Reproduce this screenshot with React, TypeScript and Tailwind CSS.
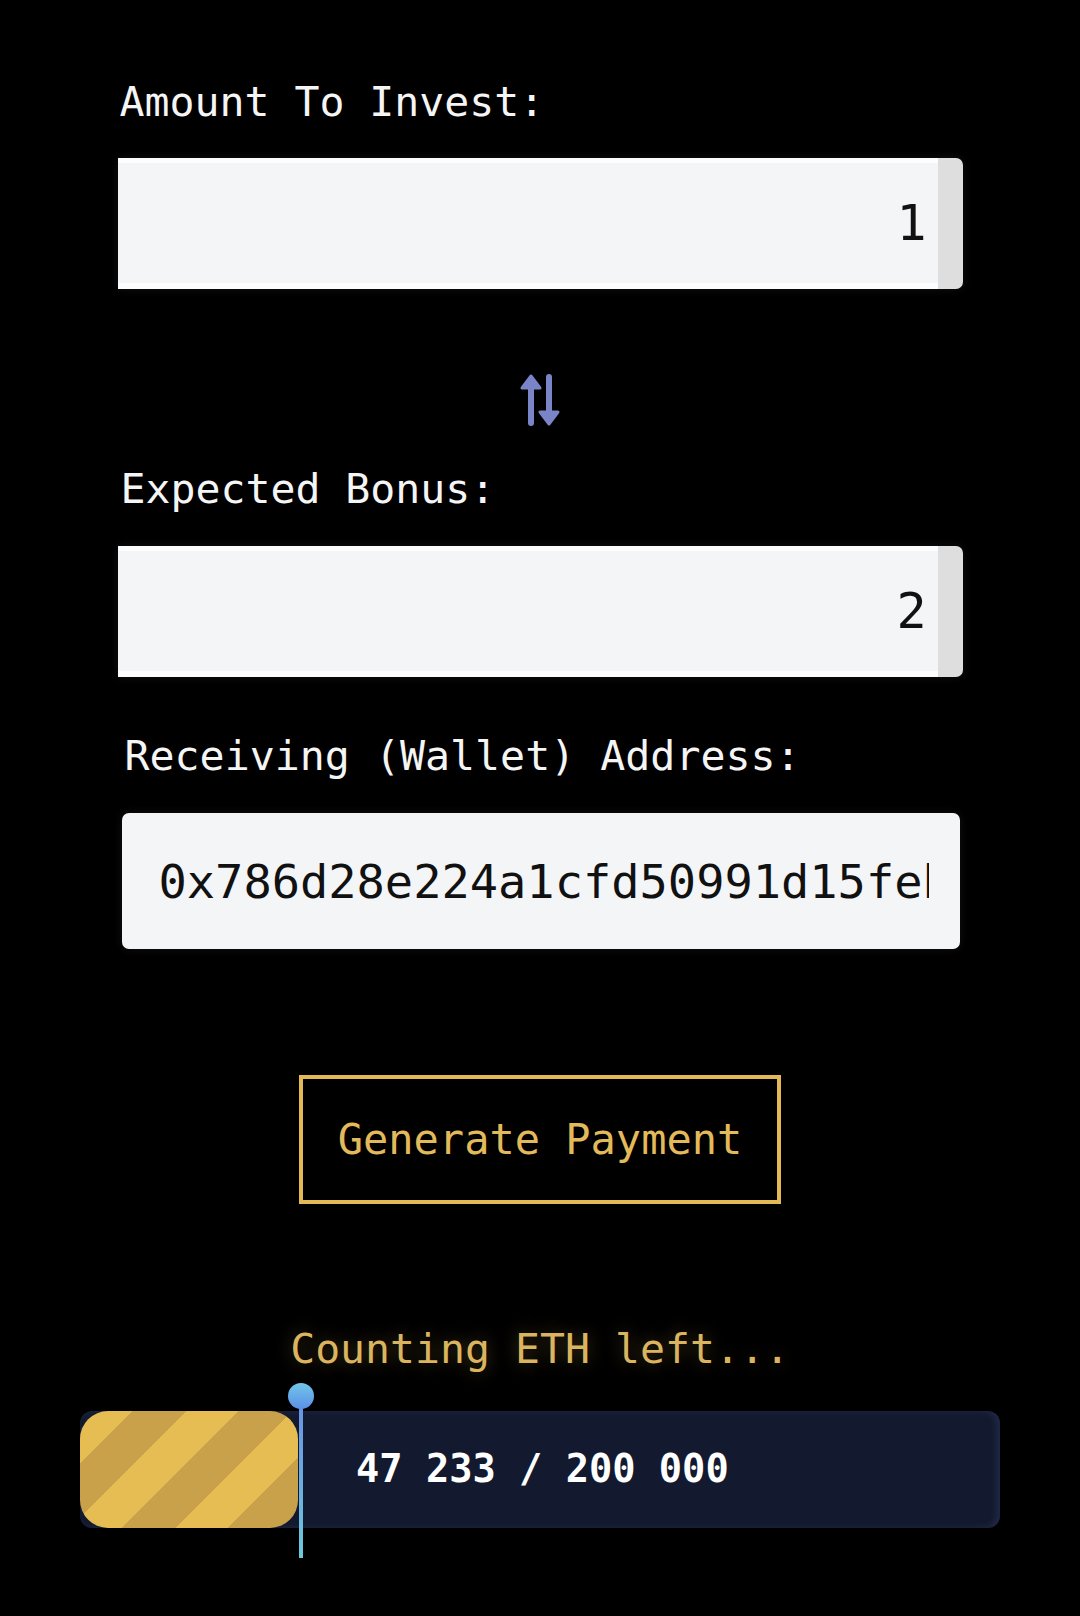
import React from 'react';

const mono = "font-['DejaVu_Sans_Mono','Liberation_Mono',monospace]";

function NumberField({ value, className = '' }: { value: string; className?: string }) {
  return (
    <div className={`flex h-[131px] overflow-hidden rounded-r-[7px] shadow-[0_0_10px_rgba(255,255,255,0.07)] ${className}`}>
      {/* value area, white bands top & bottom */}
      <div className="flex flex-1 items-center justify-end border-t-[5px] border-b-[6px] border-t-[#fdfdfd] border-b-[#fdfdfd] bg-[#f4f5f7] pr-[11px] text-[50px] leading-none text-[#111]">
        {value}
      </div>
      {/* spinner strip */}
      <div className="w-[25px] bg-[#dedede]" />
    </div>
  );
}

export default function App() {
  return (
    <div className={`h-[1616px] w-full bg-black ${mono}`}>
      <div className="mx-auto flex w-[845px] flex-col pt-[78px]">
        <label className="pl-[2px] text-[41.5px] leading-[48px] text-[#f5f5f5]">Amount To Invest:</label>
        <NumberField value="1" className="mt-[32px]" />

        {/* swap icon */}
        <svg className="mt-[84px] self-center" width="44" height="54" viewBox="0 0 44 54" fill="none">
          <line x1="13" y1="14" x2="13" y2="50" stroke="#7a85c8" strokeWidth="6" strokeLinecap="round" />
          <path d="M4 15 L22 15 L13 3 Z" fill="#7a85c8" stroke="#7a85c8" strokeWidth="3" strokeLinejoin="round" />
          <line x1="31" y1="4" x2="31" y2="40" stroke="#7a85c8" strokeWidth="6" strokeLinecap="round" />
          <path d="M22 39 L40 39 L31 51 Z" fill="#7a85c8" stroke="#7a85c8" strokeWidth="3" strokeLinejoin="round" />
        </svg>

        <label className="mt-[38px] pl-[3px] text-[41.5px] leading-[48px] text-[#f5f5f5]">Expected Bonus:</label>
        <NumberField value="2" className="mt-[33px]" />

        <label className="mt-[55px] pl-[7px] text-[41.6px] leading-[48px] text-[#f5f5f5]">Receiving (Wallet) Address:</label>
        <div className="mt-[33px] ml-[4px] flex h-[136px] w-[838px] items-center rounded-[7px] bg-[#f4f5f7] pl-[37px] pr-[31px] shadow-[0_0_10px_rgba(255,255,255,0.07)]">
          <div className="overflow-hidden whitespace-nowrap text-[47px] leading-none text-[#111]">
            0x786d28e224a1cfd50991d15feb3c07a2e4
          </div>
        </div>

        <button className="mt-[126px] flex h-[129px] w-[482px] items-center justify-center self-center border-[4px] border-[#e2b954] bg-black text-[42px] leading-none text-[#e3ba5b]">
          Generate Payment
        </button>

        <div className="mt-[121px] self-center text-[41.5px] leading-[48px] text-[#dbb45f] [text-shadow:0_0_18px_rgba(219,180,95,0.35)]">
          Counting ETH left...
        </div>
      </div>

      {/* progress bar */}
      <div className="relative mx-auto mt-[38px] flex h-[117px] w-[920px] items-center rounded-[12px] bg-[#131a2f] shadow-[inset_-4px_0_6px_rgba(60,70,120,0.35)]">
        <div className="h-full w-[218px] rounded-[28px] bg-[repeating-linear-gradient(135deg,#e6bd53_0px,#e6bd53_37px,#c9a14a_37px,#c9a14a_75px)]" />
        <div className="ml-[58px] text-[38.7px] font-bold leading-none text-white">47 233 / 200 000</div>

        {/* marker */}
        <div className="absolute left-[219px] top-[-16px] bottom-[-30px] w-[4px] bg-[linear-gradient(180deg,#6a8ee6,#6cc9dc)]" />
        <div className="absolute left-[208px] top-[-28px] h-[26px] w-[26px] rounded-full bg-[linear-gradient(180deg,#72c6ea,#5b90e6)]" />
      </div>
    </div>
  );
}
